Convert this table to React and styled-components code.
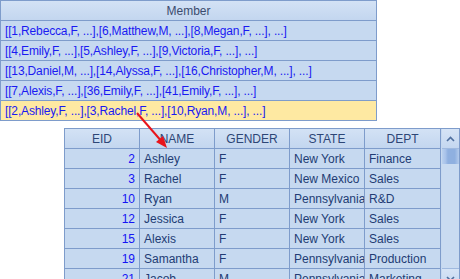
import React from "react";
import styled, { createGlobalStyle } from "styled-components";

const Global = createGlobalStyle`
  html, body { margin: 0; padding: 0; background: #ffffff; }
  body { font-family: "Liberation Sans", Arial, sans-serif; font-size: 12px; }
`;

const Page = styled.div`
  position: relative;
  width: 460px;
  height: 279px;
  overflow: hidden;
  background: #ffffff;
`;

const MemberTable = styled.div`
  width: 375px;
  border: 1px solid #7e9ccb;
  border-bottom: none;
  display: flex;
  flex-direction: column;
`;

const MemberHeader = styled.div`
  height: 19px;
  border-bottom: 1px solid #7e9ccb;
  background: linear-gradient(#d3e2f5, #c3d6ef);
  color: #3b4c6e;
  display: flex;
  align-items: center;
  justify-content: center;
`;

const MemberRow = styled.div`
  height: 19px;
  border-bottom: 1px solid #7e9ccb;
  background: ${(p) => (p.$active ? "#fee9a2" : "#c6d9f0")};
  color: #1a1af2;
  display: flex;
  align-items: center;
  padding-left: 4px;
  white-space: nowrap;
  letter-spacing: -0.15px;
`;

const Grid = styled.div`
  margin: 7px 0 0 64px;
  width: 394px;
  border: 1px solid #7e9ccb;
  border-bottom: none;
  display: grid;
  grid-template-columns: 1fr 17px;
  background: #c6d9f0;
`;

const Table = styled.div`
  display: grid;
  grid-template-columns: 75px 75px 75px 75px 76px;
  grid-auto-rows: 20px;
`;

const HeadCell = styled.div`
  border-right: 1px solid #7e9ccb;
  border-bottom: 1px solid #7e9ccb;
  background: linear-gradient(#d3e2f5, #c3d6ef);
  color: #2d4676;
  display: flex;
  align-items: center;
  justify-content: center;
  white-space: nowrap;
  overflow: hidden;
`;

const Cell = styled.div`
  border-right: 1px solid #7e9ccb;
  border-bottom: 1px solid #7e9ccb;
  color: ${(p) => (p.$num ? "#1414f5" : "#223c74")};
  display: flex;
  align-items: center;
  justify-content: ${(p) => (p.$num ? "flex-end" : "flex-start")};
  padding: 0 4px 0 4px;
  white-space: nowrap;
  overflow: hidden;
`;

const Scroll = styled.div`
  display: flex;
  flex-direction: column;
  background: #c9dbf1;
`;

const ScrollBtn = styled.div`
  height: 19px;
  border-bottom: 1px solid #9fb9df;
  border-top: ${(p) => (p.$down ? "1px solid #9fb9df" : "none")};
  background: linear-gradient(#d6e4f6, #c4d7f0);
  display: flex;
  align-items: center;
  justify-content: center;
`;

const Thumb = styled.div`
  height: 15px;
  background: linear-gradient(90deg, #b9d0ee 0%, #a9c3ea 20%, #8fb0e0 35%, #8fb0e0 75%, #b4cbec 100%);
`;

const Track = styled.div`
  flex: 1;
`;

const Arrow = styled.svg`
  position: absolute;
  left: 0;
  top: 0;
  pointer-events: none;
`;

const members = [
  "[[1,Rebecca,F, ...],[6,Matthew,M, ...],[8,Megan,F, ...], ...]",
  "[[4,Emily,F, ...],[5,Ashley,F, ...],[9,Victoria,F, ...], ...]",
  "[[13,Daniel,M, ...],[14,Alyssa,F, ...],[16,Christopher,M, ...], ...]",
  "[[7,Alexis,F, ...],[36,Emily,F, ...],[41,Emily,F, ...], ...]",
  "[[2,Ashley,F, ...],[3,Rachel,F, ...],[10,Ryan,M, ...], ...]",
];

const rows = [
  [2, "Ashley", "F", "New York", "Finance"],
  [3, "Rachel", "F", "New Mexico", "Sales"],
  [10, "Ryan", "M", "Pennsylvania", "R&D"],
  [12, "Jessica", "F", "New York", "Sales"],
  [15, "Alexis", "F", "New York", "Sales"],
  [19, "Samantha", "F", "Pennsylvania", "Production"],
  [21, "Jacob", "M", "Pennsylvania", "Marketing"],
];

const heads = ["EID", "NAME", "GENDER", "STATE", "DEPT"];

export default function App() {
  return (
    <Page>
      <Global />
      <MemberTable>
        <MemberHeader>Member</MemberHeader>
        {members.map((m, i) => (
          <MemberRow key={i} $active={i === 4}>{m}</MemberRow>
        ))}
      </MemberTable>
      <Grid>
        <Table>
          {heads.map((h) => (
            <HeadCell key={h}>{h}</HeadCell>
          ))}
          {rows.map((r) =>
            r.map((v, j) => (
              <Cell key={r[0] + "-" + j} $num={j === 0}>{v}</Cell>
            ))
          )}
        </Table>
        <Scroll>
          <ScrollBtn>
            <svg width="9" height="6" viewBox="0 0 9 6">
              <path d="M1 5 L4.5 1.5 L8 5" fill="none" stroke="#4f6f9f" strokeWidth="1.6" />
            </svg>
          </ScrollBtn>
          <Thumb />
          <Track />
          <ScrollBtn $down>
            <svg width="9" height="6" viewBox="0 0 9 6">
              <path d="M1 1 L4.5 4.5 L8 1" fill="none" stroke="#4f6f9f" strokeWidth="1.6" />
            </svg>
          </ScrollBtn>
        </Scroll>
      </Grid>
      <Arrow width="460" height="279" viewBox="0 0 460 279">
        <line x1="137" y1="113" x2="163" y2="143" stroke="#e8141c" strokeWidth="2" />
        <path d="M167 148 L156 142 L163 136 Z" fill="#e8141c" />
      </Arrow>
    </Page>
  );
}
